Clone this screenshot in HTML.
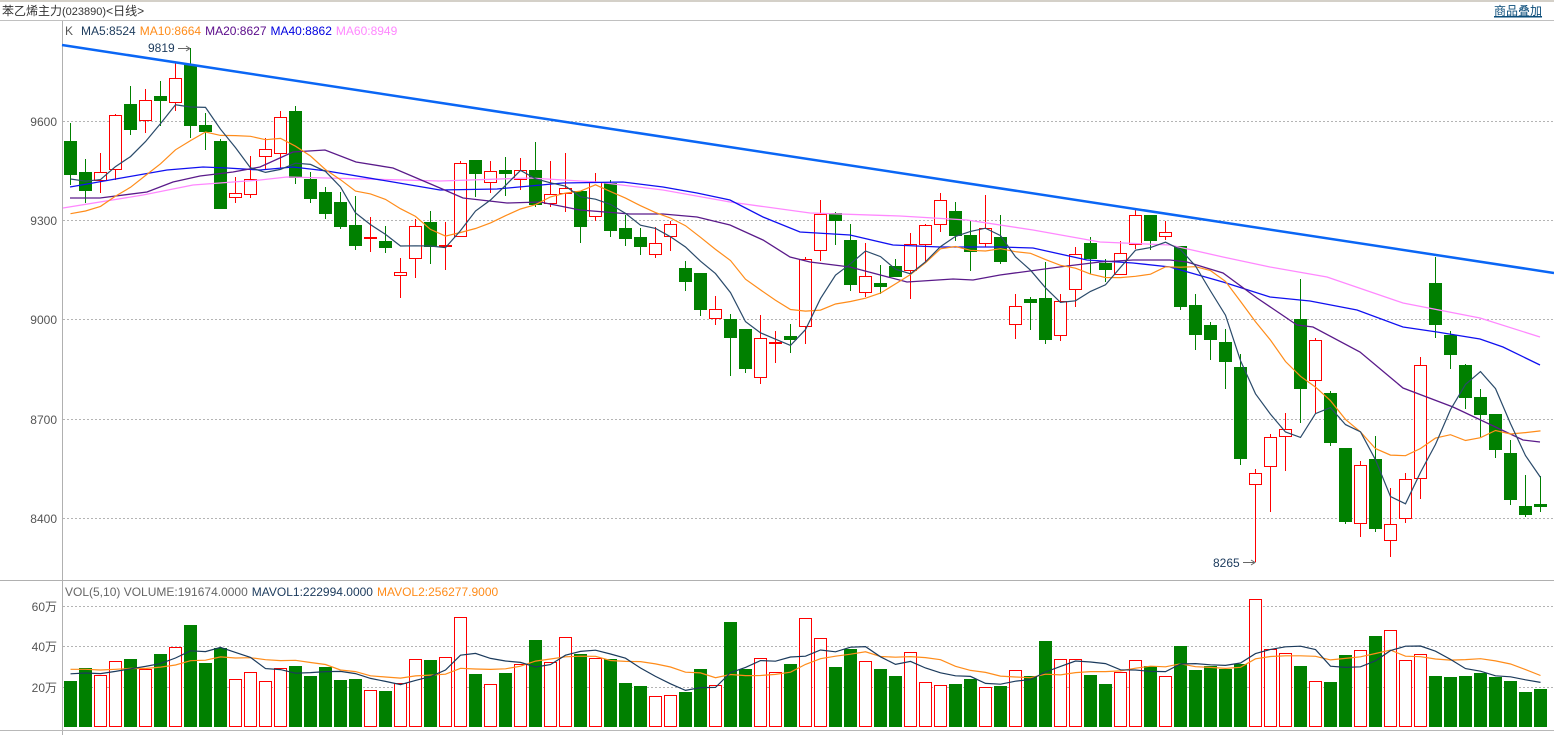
<!DOCTYPE html>
<html><head><meta charset="utf-8">
<style>
html,body{margin:0;padding:0;background:#fff;}
body{width:1554px;height:735px;overflow:hidden;position:relative;font-family:"Liberation Sans","Noto Sans CJK SC",sans-serif;}
svg{position:absolute;left:0;top:0;}
</style></head><body>
<svg id="s" width="1554" height="735" xmlns="http://www.w3.org/2000/svg" font-family="Liberation Sans, Noto Sans CJK SC, sans-serif">
<rect x="0" y="0" width="1554" height="2" fill="#d4d0c8"/>
<line x1="0" y1="20.5" x2="1554" y2="20.5" stroke="#c0c0c0"/>
<text x="2" y="15" font-size="12" fill="#333">苯乙烯主力<tspan font-size="11">(023890)</tspan>&lt;日线&gt;</text>
<text x="1494" y="15" font-size="12" fill="#0b4d7a" text-decoration="underline">商品叠加</text>
<line x1="1494" y1="17" x2="1542" y2="17" stroke="#0b4d7a"/>
<line x1="62.5" y1="21" x2="62.5" y2="735" stroke="#b0b0b0"/>
<line x1="0" y1="580.5" x2="1554" y2="580.5" stroke="#b0b0b0"/>
<line x1="0" y1="730.5" x2="1554" y2="730.5" stroke="#b8b8b8"/>
<g stroke="#b4b4b4" stroke-dasharray="2,2">
<line x1="63" y1="121.5" x2="1554" y2="121.5"/><line x1="63" y1="220.5" x2="1554" y2="220.5"/>
<line x1="63" y1="319.5" x2="1554" y2="319.5"/><line x1="63" y1="419.5" x2="1554" y2="419.5"/>
<line x1="63" y1="518.5" x2="1554" y2="518.5"/>
<line x1="63" y1="606.5" x2="1554" y2="606.5"/><line x1="63" y1="646.5" x2="1554" y2="646.5"/>
<line x1="63" y1="687.5" x2="1554" y2="687.5"/>
</g>
<g font-size="12" fill="#555" text-anchor="end">
<text x="57" y="126">9600</text><text x="57" y="225">9300</text><text x="57" y="324">9000</text>
<text x="57" y="424">8700</text><text x="57" y="523">8400</text>
<text x="57" y="611">60万</text><text x="57" y="651">40万</text><text x="57" y="692">20万</text>
</g>
<text x="65" y="35" font-size="12"><tspan fill="#555">K</tspan><tspan fill="#1b3a5c" dx="8">MA5:8524</tspan><tspan fill="#ff8c1a" dx="4">MA10:8664</tspan><tspan fill="#5a0a8a" dx="4">MA20:8627</tspan><tspan fill="#0000e0" dx="4">MA40:8862</tspan><tspan fill="#ff88ff" dx="4">MA60:8949</tspan></text>
<text x="65" y="596" font-size="12"><tspan fill="#666">VOL(5,10) VOLUME:191674.0000</tspan><tspan fill="#1b3a5c" dx="4">MAVOL1:222994.0000</tspan><tspan fill="#ff8c1a" dx="4">MAVOL2:256277.9000</tspan></text>
<text x="148" y="52" font-size="12" fill="#1b3a5c">9819</text>
<line x1="178" y1="48.5" x2="189" y2="48.5" stroke="#666"/><path d="M186 46 L190 48.5 L186 51" fill="none" stroke="#666"/>
<text x="1213" y="567" font-size="12" fill="#1b3a5c">8265</text>
<line x1="1243" y1="562.5" x2="1254" y2="562.5" stroke="#666"/><path d="M1251 560 L1255 562.5 L1251 565" fill="none" stroke="#666"/>
<g id="vol"></g>
<g id="cand"></g>
<g id="lines" fill="none"></g>
<line x1="62" y1="45" x2="1554" y2="273" stroke="#0a66f5" stroke-width="2.5"/>
</svg>
<script>
var C=[
['g',141,175,123,185],['g',172,191,159,203],['r',172,181,153,193],['r',115,170,114,180],['g',104,130,86,135],
['r',100,121,89,133],['g',96,101,81,126],['r',78,103,63,111],['g',65,126,48,138],['g',125,132,113,150],
['g',141,209,139,209],['r',193,198,177,203],['r',179,195,156,198],['r',149,157,138,170],['r',117,154,111,168],
['g',111,178,106,184],['g',179,199,172,203],['g',192,214,187,219],['g',202,227,192,229],['g',225,246,196,250],
['r',237,239,217,252],['g',241,248,226,253],['r',272,276,258,298],['r',226,259,219,278],['g',222,247,211,264],
['r',245,247,222,270],['r',163,237,161,237],['g',160,174,160,197],['r',171,183,161,193],['g',170,174,157,196],
['r',170,180,158,190],['g',170,205,142,207],['r',194,204,161,207],['r',188,194,153,212],['g',191,227,191,243],
['r',182,217,173,221],['g',183,231,180,237],['g',228,239,215,246],['g',237,247,228,255],['r',243,255,227,258],
['r',224,237,221,251],['g',268,282,261,291],['g',273,310,273,316],['r',309,319,296,325],['g',319,338,314,376],
['g',329,369,329,373],['r',338,378,315,384],['r',342,343,331,363],['g',336,340,324,353],['r',259,327,257,344],
['r',214,251,200,261],['g',213,221,212,245],['g',240,285,224,291],['r',276,293,243,297],['g',283,287,265,294],
['g',266,277,259,277],['r',244,271,233,299],['r',225,245,224,262],['r',200,225,193,232],['g',211,236,202,241],
['g',235,252,220,271],['r',228,244,195,247],['g',237,262,215,264],['r',306,325,294,339],['g',299,303,297,330],
['g',298,340,262,344],['r',301,336,294,341],['r',254,290,247,307],['g',243,259,237,274],['g',263,270,259,282],
['r',253,275,241,275],['r',215,245,210,249],['g',215,241,215,250],['r',232,237,221,240],['g',246,307,246,310],
['g',305,335,294,350],['g',325,340,322,360],['g',342,362,329,389],['g',367,459,354,465],['r',473,485,469,562],
['r',437,467,434,512],['r',429,437,413,471],['g',319,389,279,423],['r',340,381,338,413],['g',393,443,391,446],
['g',448,522,448,524],['r',465,524,461,537],['g',459,529,436,532],['r',524,541,488,557],['r',479,519,473,523],
['r',365,479,357,499],['g',283,325,257,338],['g',335,355,331,369],['g',365,398,364,409],['g',397,415,389,437],
['g',414,450,414,458],['g',453,500,440,505],['g',506,515,475,517],['g',504,507,476,512]];
var V=[681,668,675,661,659,669,654,647,625,663,648,679,672,681,668,666,676,667,680,679,690,691,683,659,660,657,617,674,684,673,
664,640,662,637,654,658,659,683,686,696,695,692,669,685,622,669,658,672,664,618,638,667,649,661,669,676,652,682,685,684,
679,687,686,670,676,641,659,659,675,684,672,660,666,676,646,670,666,669,664,599,649,653,666,681,682,655,650,636,630,660,
654,676,677,676,673,677,681,692,689];
var NS='http://www.w3.org/2000/svg';
function el(p,t,a){var e=document.createElementNS(NS,t);for(var k in a)e.setAttribute(k,a[k]);p.appendChild(e);return e;}
var cg=document.getElementById('cand'),vg=document.getElementById('vol'),lg=document.getElementById('lines');
var closes=[];
C.forEach(function(c,i){
 var x=64+15*i,cx=x+6.5;
 if(c[0]=='g'){
  el(cg,'line',{x1:cx,y1:c[3],x2:cx,y2:c[4],stroke:'#008000'});
  el(cg,'rect',{x:x,y:c[1],width:13,height:Math.max(1,c[2]-c[1]),fill:'#008000'});
  closes.push(c[2]);
 }else{
  if(c[3]<c[1])el(cg,'line',{x1:cx,y1:c[3],x2:cx,y2:c[1],stroke:'#ff0000'});
  if(c[4]>c[2])el(cg,'line',{x1:cx,y1:c[2],x2:cx,y2:c[4],stroke:'#ff0000'});
  el(cg,'rect',{x:x+0.5,y:c[1]+0.5,width:12,height:Math.max(1,c[2]-c[1]-1),fill:'#fff',stroke:'#ff0000'});
  closes.push(c[1]);
 }
 var vt=V[i];
 if(c[0]=='g')el(vg,'rect',{x:x,y:vt,width:13,height:727-vt,fill:'#008000'});
 else el(vg,'rect',{x:x+0.5,y:vt+0.5,width:12,height:727-vt-1,fill:'#fff',stroke:'#ff0000'});
});
function ma(arr,n,prior){var out=[];for(var i=0;i<arr.length;i++){var s=0;for(var j=i-n+1;j<=i;j++)s+=(j<0?prior:arr[j]);out.push(s/n);}return out;}
function poly(vals,col,w){var p=vals.map(function(v,i){return (70.5+15*i)+','+v.toFixed(1);}).join(' ');el(lg,'polyline',{points:p,stroke:col,'stroke-width':w||1});}
function polyp(pts,col){el(lg,'polyline',{points:pts.map(function(q){return q[0]+','+q[1];}).join(' '),stroke:col,'stroke-width':1.3});}
polyp([[63,208],[143,195],[193,185],[260,180],[287,177],[327,178],[440,181],[530,178],[597,182],[663,190],[730,202],[810,213],[900,216],[967,220],[1033,230],[1100,242],[1170,245],[1223,257],[1270,267],[1327,277],[1403,303],[1480,318],[1540,337]],'#ff88ff');
polyp([[70,187],[127,177],[167,170],[203,167],[227,168],[260,170],[293,167],[327,171],[393,182],[440,190],[497,189],[563,183],[623,182],[663,187],[697,193],[730,200],[763,217],[800,232],[850,235],[893,245],[940,247],[1000,247],[1033,248],[1087,260],[1133,263],[1170,267],[1223,282],[1270,297],[1310,301],[1357,310],[1403,327],[1437,332],[1480,339],[1503,347],[1540,365]],'#1010f0');
polyp([[70,198],[100,198],[147,192],[173,182],[200,176],[233,172],[260,167],[293,152],[325,150],[356,162],[393,168],[440,188],[463,198],[507,203],[540,202],[580,210],[630,214],[663,214],[697,217],[730,225],[763,240],[790,257],[810,262],[850,267],[907,282],[953,279],[973,280],[1000,275],[1067,266],[1100,262],[1133,260],[1170,260],[1187,262],[1223,273],[1257,298],[1297,325],[1313,327],[1360,352],[1403,388],[1453,407],[1487,423],[1523,440],[1540,442]],'#5a1a8a');
poly(ma(closes,10,218),'#ff8c1a',1.2);
poly(ma(closes,5,180),'#2a4a6a',1.2);
poly(ma(V,10,668),'#ff8c1a',1.2);
poly(ma(V,5,672),'#1b3a5c',1.2);
</script>
</body></html>
